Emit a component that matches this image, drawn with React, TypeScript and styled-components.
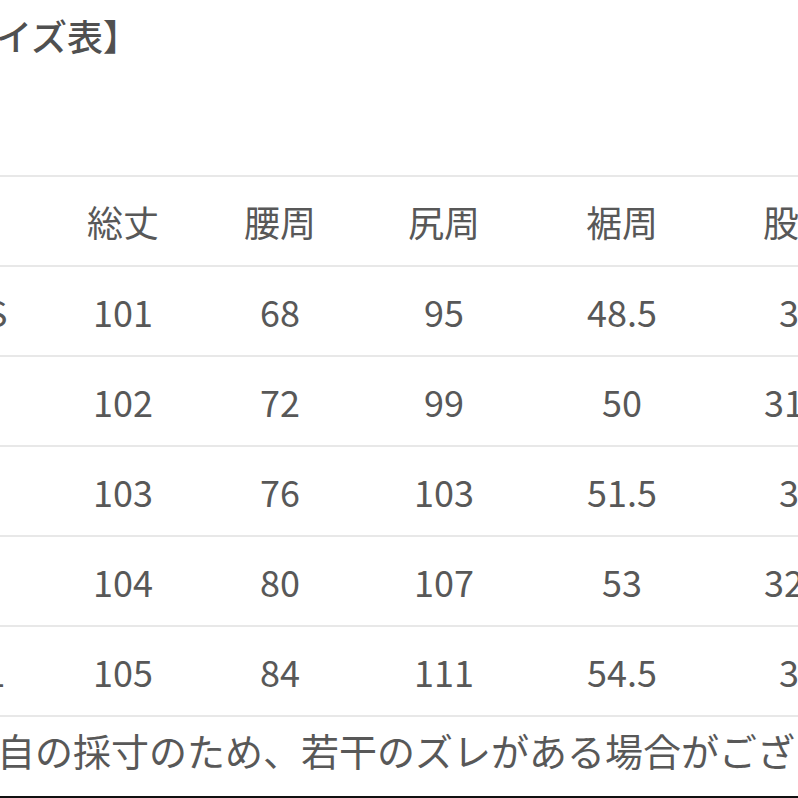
import React from 'react'
import styled, { createGlobalStyle } from 'styled-components'

const GlobalStyle = createGlobalStyle`
  html, body {
    margin: 0;
    padding: 0;
    background: #ffffff;
  }
  body {
    font-family: 'Noto Sans CJK JP', 'Noto Sans', sans-serif;
  }
`

const Page = styled.div`
  width: 798px;
  height: 798px;
  overflow: hidden;
  background: #ffffff;
  display: flex;
  flex-flow: column nowrap;
  color: #585858;
`

const TitleBlock = styled.div`
  height: 175px;
  flex-shrink: 0;
`

const Title = styled.div`
  font-size: 36px;
  line-height: 70px;
  font-weight: 500;
  color: #505050;
  margin-left: -76px;
  white-space: nowrap;
`

const Table = styled.div`
  display: grid;
  grid-template-columns: 105px 156px 158px 170px 186px 168px 160px;
  margin-left: -60px;
  width: max-content;
  border-bottom: 2px solid #e8e8e8;
  flex-shrink: 0;
`

const Row = styled.div`
  display: contents;
`

const Cell = styled.div<{ $align?: 'left' | 'center' }>`
  height: 88px;
  border-top: 2px solid #e8e8e8;
  display: flex;
  align-items: center;
  justify-content: ${(p) => (p.$align === 'left' ? 'flex-start' : 'center')};
  padding-left: ${(p) => (p.$align === 'left' ? '25px' : '0')};
  font-size: 36px;
  white-space: nowrap;
  color: #585858;
`

const Note = styled.div`
  flex: 1;
  display: flex;
  align-items: center;
  padding-bottom: 14px;
  font-size: 38px;
  margin-left: -155px;
  white-space: nowrap;
  color: #585858;
`

const BottomEdge = styled.div`
  height: 2px;
  background: #111111;
  flex-shrink: 0;
`

const headers = ['', '総丈', '腰周', '尻周', '裾周', '股下', 'わたり']

const rows = [
  ['SS', '101', '68', '95', '48.5', '30', '30'],
  ['S', '102', '72', '99', '50', '31.5', '31'],
  ['M', '103', '76', '103', '51.5', '31', '32'],
  ['L', '104', '80', '107', '53', '32.5', '33'],
  ['LL', '105', '84', '111', '54.5', '33', '34'],
]

export default function App() {
  return (
    <>
      <GlobalStyle />
      <Page>
        <TitleBlock>
          <Title>【サイズ表】</Title>
        </TitleBlock>
        <Table>
          <Row>
            {headers.map((h, i) => (
              <Cell key={i} $align={i === 0 ? 'left' : 'center'}>
                {h}
              </Cell>
            ))}
          </Row>
          {rows.map((r) => (
            <Row key={r[0]}>
              {r.map((v, i) => (
                <Cell key={i} $align={i === 0 ? 'left' : 'center'}>
                  {v}
                </Cell>
              ))}
            </Row>
          ))}
        </Table>
        <Note>※当店独自の採寸のため、若干のズレがある場合がございます。</Note>
        <BottomEdge />
      </Page>
    </>
  )
}
